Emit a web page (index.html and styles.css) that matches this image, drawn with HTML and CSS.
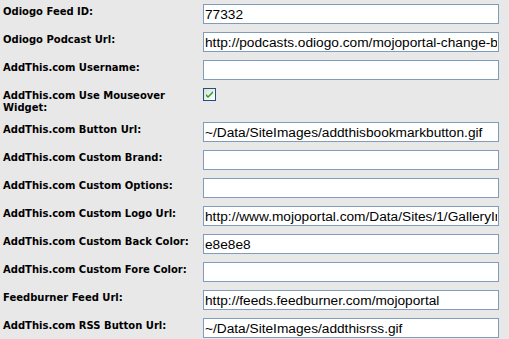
FILE: index.html
```html
<!DOCTYPE html>
<html lang="en">
<head>
  <meta charset="UTF-8">
  <meta name="viewport" content="width=device-width, initial-scale=1.0">
  <title>Feed Settings</title>
  <link rel="stylesheet" href="styles.css">
</head>
<body>
  <div class="settings">
    <div class="settingrow">
      <label class="settinglabel" for="odiogo-id">Odiogo Feed ID:</label>
      <input class="forminput" id="odiogo-id" type="text" value="77332">
    </div>
    <div class="settingrow">
      <label class="settinglabel" for="odiogo-url">Odiogo Podcast Url:</label>
      <input class="forminput" id="odiogo-url" type="text" value="http://podcasts.odiogo.com/mojoportal-change-blog/podcasts-xml.php">
    </div>
    <div class="settingrow">
      <label class="settinglabel" for="addthis-user">AddThis.com Username:</label>
      <input class="forminput" id="addthis-user" type="text" value="">
    </div>
    <div class="settingrow">
      <label class="settinglabel" for="addthis-mouseover">AddThis.com Use Mouseover Widget:</label>
      <span class="checkbox" id="addthis-mouseover">
        <svg width="13" height="13" viewBox="0 0 13 13">
          <defs>
            <linearGradient id="cbfill" x1="0" y1="0" x2="1" y2="1">
              <stop offset="0" stop-color="#dcdcd6"/>
              <stop offset="1" stop-color="#ffffff"/>
            </linearGradient>
          </defs>
          <rect x="0.5" y="0.5" width="12" height="12" fill="url(#cbfill)" stroke="#1c5180"/>
          <path d="M3 6 L5 8 L10 3 L10 5 L5 10 L3 8 Z" fill="#21a121"/>
        </svg>
      </span>
    </div>
    <div class="settingrow">
      <label class="settinglabel" for="addthis-button">AddThis.com Button Url:</label>
      <input class="forminput" id="addthis-button" type="text" value="~/Data/SiteImages/addthisbookmarkbutton.gif">
    </div>
    <div class="settingrow">
      <label class="settinglabel" for="addthis-brand">AddThis.com Custom Brand:</label>
      <input class="forminput" id="addthis-brand" type="text" value="">
    </div>
    <div class="settingrow">
      <label class="settinglabel" for="addthis-options">AddThis.com Custom Options:</label>
      <input class="forminput" id="addthis-options" type="text" value="">
    </div>
    <div class="settingrow">
      <label class="settinglabel" for="addthis-logo">AddThis.com Custom Logo Url:</label>
      <input class="forminput" id="addthis-logo" type="text" value="http://www.mojoportal.com/Data/Sites/1/GalleryImages/mojologo.gif">
    </div>
    <div class="settingrow">
      <label class="settinglabel" for="addthis-back">AddThis.com Custom Back Color:</label>
      <input class="forminput" id="addthis-back" type="text" value="e8e8e8">
    </div>
    <div class="settingrow">
      <label class="settinglabel" for="addthis-fore">AddThis.com Custom Fore Color:</label>
      <input class="forminput" id="addthis-fore" type="text" value="">
    </div>
    <div class="settingrow">
      <label class="settinglabel" for="feedburner-url">Feedburner Feed Url:</label>
      <input class="forminput" id="feedburner-url" type="text" value="http://feeds.feedburner.com/mojoportal">
    </div>
    <div class="settingrow">
      <label class="settinglabel" for="addthis-rss">AddThis.com RSS Button Url:</label>
      <input class="forminput" id="addthis-rss" type="text" value="~/Data/SiteImages/addthisrss.gif">
    </div>
  </div>
</body>
</html>
```

FILE: styles.css
```css
body {
  margin: 0;
  background-color: #e8e8e8;
  color: #000;
  font-family: 'DejaVu Sans', Verdana, sans-serif;
}

.settings {
  padding-left: 3px;
}

.settingrow {
  display: flex;
  align-items: flex-start;
  padding: 4px 0;
}

.settinglabel {
  width: 200px;
  flex-shrink: 0;
  padding-top: 2px;
  font-size: 10px;
  font-weight: bold;
  line-height: 12px;
}

.forminput {
  box-sizing: border-box;
  width: 296px;
  height: 20px;
  margin: 0;
  padding: 0 1px;
  border: 1px solid #7f9db9;
  background-color: #fff;
  color: #000;
  font-family: 'Liberation Sans', Arial, sans-serif;
  font-size: 13.7px;
  outline: none;
}

.checkbox {
  display: block;
  width: 13px;
  height: 13px;
}

.checkbox svg {
  display: block;
}
```
